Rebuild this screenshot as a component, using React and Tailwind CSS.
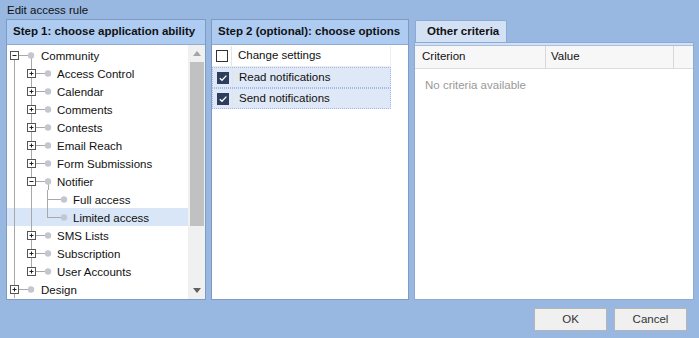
import React from 'react';

const LINE = '#a8a8a8';
const DOT = '#c3c7cf';

// connector x per level (svg coords, tree body starts at page x=7)
const CX = [7, 24, 40];

const treeRows = [
  { label: 'Community', level: 0, box: 'minus', first: true, last: false, open: true, anc: [] },
  { label: 'Access Control', level: 1, box: 'plus', anc: [0] },
  { label: 'Calendar', level: 1, box: 'plus', anc: [0] },
  { label: 'Comments', level: 1, box: 'plus', anc: [0] },
  { label: 'Contests', level: 1, box: 'plus', anc: [0] },
  { label: 'Email Reach', level: 1, box: 'plus', anc: [0] },
  { label: 'Form Submissions', level: 1, box: 'plus', anc: [0] },
  { label: 'Notifier', level: 1, box: 'minus', open: true, anc: [0] },
  { label: 'Full access', level: 2, anc: [0, 1] },
  { label: 'Limited access', level: 2, last: true, selected: true, anc: [0, 1] },
  { label: 'SMS Lists', level: 1, box: 'plus', anc: [0] },
  { label: 'Subscription', level: 1, box: 'plus', anc: [0] },
  { label: 'User Accounts', level: 1, box: 'plus', last: true, anc: [0] },
  { label: 'Design', level: 0, box: 'plus', anc: [] },
];

const TreeGlyph = ({ row }) => {
  const cx = CX[row.level];
  const dx = cx + 17;
  const w = row.level === 0 ? dx + 10 : dx + 9;
  return (
    <svg width={w} height="18" className="shrink-0 block">
      {row.anc.map((a) => (
        <line key={a} x1={CX[a] + 0.5} y1="0" x2={CX[a] + 0.5} y2="18" stroke={LINE} />
      ))}
      <line x1={cx + 0.5} y1={row.first ? 9 : 0} x2={cx + 0.5} y2={row.last ? 9 : 18} stroke={LINE} />
      <line x1={cx} y1="9.5" x2={dx} y2="9.5" stroke={LINE} />
      {row.open && <line x1={dx + 0.5} y1="9" x2={dx + 0.5} y2="18" stroke={LINE} />}
      {row.box && (
        <g>
          <rect x={cx - 3.5} y="5.5" width="8" height="8" fill="#fff" stroke="#555" />
          <line x1={cx - 1.5} y1="9.5" x2={cx + 2.5} y2="9.5" stroke="#222" />
          {row.box === 'plus' && <line x1={cx + 0.5} y1="7.5" x2={cx + 0.5} y2="11.5" stroke="#222" />}
        </g>
      )}
      <circle cx={dx} cy="9.5" r="3.2" fill={DOT} />
    </svg>
  );
};

const Check = ({ on }) => (
  <span
    className={`w-[12px] h-[12px] flex items-center justify-center border ${
      on ? 'bg-[#2e3d5c] border-[#2e3d5c]' : 'bg-white border-[#333]'
    }`}
  >
    {on && (
      <svg width="10" height="10" viewBox="0 0 10 10">
        <path d="M1.8 5.2 L4 7.3 L8.4 2.6" fill="none" stroke="#fff" strokeWidth="1.3" />
      </svg>
    )}
  </span>
);

const PanelHeader = ({ children }) => (
  <div className="h-[25px] bg-[#aecbf1] border-b border-[#8fabd3] flex items-center pl-[6px] font-bold text-[11.5px] text-[#111]">
    {children}
  </div>
);

export default function App() {
  const options = [
    { label: 'Change settings', on: false },
    { label: 'Read notifications', on: true },
    { label: 'Send notifications', on: true },
  ];
  return (
    <div className="w-[699px] h-[338px] bg-[#98b8e1] flex flex-col font-['Liberation_Sans',Arial,sans-serif] text-[11.5px] text-[#111] overflow-hidden">
      <div className="h-[19px] pl-[7px] pt-[3px] leading-[14px]">Edit access rule</div>

      <div className="flex pl-[6px] h-[281px]">
        {/* Panel 1 */}
        <div className="w-[200px] h-full border border-[#7f9bc2] bg-white flex flex-col">
          <PanelHeader>Step 1: choose application ability</PanelHeader>
          <div className="flex flex-1 min-h-0">
            <div className="flex-1 pt-[1px]">
              {treeRows.map((row) => (
                <div
                  key={row.label}
                  className={`h-[18px] flex items-center ${row.selected ? 'bg-[#d9e6f8]' : ''}`}
                >
                  <TreeGlyph row={row} />
                  <span className="leading-[18px] whitespace-nowrap pt-[1px]">{row.label}</span>
                </div>
              ))}
            </div>
            <div className="w-[17px] bg-[#f0f0f0] flex flex-col items-center">
              <div className="h-[17px] flex items-center justify-center">
                <svg width="8" height="5"><path d="M0 5 L4 0 L8 5 Z" fill="#a3a3a3" /></svg>
              </div>
              <div className="w-[14px] h-[164px] bg-[#c1c1c1]" />
              <div className="flex-1" />
              <div className="h-[17px] flex items-center justify-center">
                <svg width="8" height="5"><path d="M0 0 L8 0 L4 5 Z" fill="#606060" /></svg>
              </div>
            </div>
          </div>
        </div>

        {/* Panel 2 */}
        <div className="ml-[5px] w-[198px] h-full border border-[#7f9bc2] bg-white flex flex-col">
          <PanelHeader>Step 2 (optional): choose options</PanelHeader>
          <div className="w-[179px] pt-[1px]">
            {options.map((o) => (
              <div
                key={o.label}
                className={`flex items-center h-[21px] ${
                  o.on
                    ? 'bg-[#dfe8f6] border border-dotted border-[#a3bae9]'
                    : 'border-b border-r border-[#ededed]'
                }`}
              >
                <div className="w-[20px] h-full flex items-center justify-center border-r border-[#e4e4e4]">
                  <Check on={o.on} />
                </div>
                <span className="pl-[6px]">{o.label}</span>
              </div>
            ))}
          </div>
        </div>

        {/* Panel 3 */}
        <div className="ml-[5px] w-[280px] h-full flex flex-col">
          <div className="h-[23px] flex items-end">
            <div className="ml-[1px] w-[92px] h-[22px] bg-[#d3e1f4] border border-b-0 border-[#8eaad4] rounded-t-[2px] flex items-center pl-[11px] font-bold">
              Other criteria
            </div>
          </div>
          <div className="flex-1 border border-[#8eaad4] bg-white flex flex-col">
            <div className="h-[3px] bg-[#d3e1f4] border-b border-[#a9bfdc]" />
            <div className="h-[23px] flex bg-[#f7f7f7] border-b border-[#dcdcdc]">
              <div className="w-[131px] border-r border-[#d8d8d8] pl-[7px] flex items-center">Criterion</div>
              <div className="w-[128px] border-r border-[#d8d8d8] pl-[5px] flex items-center">Value</div>
              <div className="flex-1" />
            </div>
            <div className="pl-[10px] pt-[8px] text-[#999]">No criteria available</div>
          </div>
        </div>
      </div>

      <div className="flex justify-end gap-[7px] pr-[12px] pt-[8px]">
        <button className="w-[73px] h-[23px] bg-[#f0f0f0] border border-[#b5b5b5] text-[11.5px] text-[#333]">OK</button>
        <button className="w-[73px] h-[23px] bg-[#f0f0f0] border border-[#b5b5b5] text-[11.5px] text-[#333]">Cancel</button>
      </div>
    </div>
  );
}
